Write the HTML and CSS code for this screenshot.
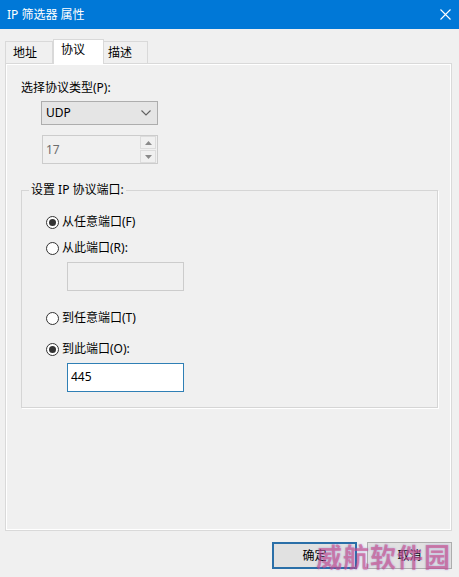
FILE: index.html
```html
<!DOCTYPE html>
<html>
<head>
<meta charset="utf-8">
<link rel="stylesheet" href="styles.css">
</head>
<body>
<div class="titlebar">
  <span class="title">IP 筛选器 属性</span>
  <svg class="close" width="11" height="11" viewBox="0 0 11 11"><path d="M0.5 0.5L10.5 10.5M10.5 0.5L0.5 10.5" stroke="#fff" stroke-width="1.1" fill="none"/></svg>
</div>

<div class="tabs">
  <div class="tab t1">地址</div>
  <div class="tab on">协议</div>
  <div class="tab t3">描述</div>
</div>

<div class="panel">
  <div class="lbl">选择协议类型(P):</div>
  <div class="select">
    <span>UDP</span>
    <svg class="chev" width="10" height="6" viewBox="0 0 10 6"><path d="M0.5 0.5L5 5L9.5 0.5" stroke="#606060" stroke-width="1.1" fill="none"/></svg>
  </div>
  <div class="spin">
    <span>17</span>
    <div class="spinbtns">
      <div class="sb"><svg width="7" height="4" viewBox="0 0 7 4"><path d="M0 4L3.5 0L7 4Z" fill="#8a8a8a"/></svg></div>
      <div class="sb"><svg width="7" height="4" viewBox="0 0 7 4"><path d="M0 0L3.5 4L7 0Z" fill="#8a8a8a"/></svg></div>
    </div>
  </div>

  <div class="group">
    <div class="legend">设置 IP 协议端口:</div>
    <div class="opt"><span class="radio on"></span>从任意端口(F)</div>
    <div class="opt r2"><span class="radio"></span>从此端口(R):</div>
    <div class="box off"></div>
    <div class="opt r3"><span class="radio"></span>到任意端口(T)</div>
    <div class="opt r4"><span class="radio on"></span>到此端口(O):</div>
    <div class="box cur">445</div>
  </div>
</div>

<div class="footer">
  <div class="btn def">确定</div>
  <div class="btn">取消</div>
  <div class="mark">威航软件园</div>
</div>
</body>
</html>
```

FILE: styles.css
```css
* {box-sizing: border-box;}
body {
  margin: 0;
  width: 459px;
  height: 577px;
  overflow: hidden;
  background: #f0f0f0;
  font-family: "Noto Sans", "Noto Sans CJK SC", sans-serif;
  font-size: 12px;
  line-height: 16px;
  color: #000;
}

.titlebar {
  height: 29px;
  background: #0078d7;
  color: #fff;
  display: flex;
  align-items: center;
  padding: 0 7px 0 7px;
}
.title {flex: 1;}
.close {margin-right: 1px;}

.tabs {
  display: flex;
  align-items: flex-end;
  padding: 10px 0 0 5px;
  height: 34px;
}
.tab {
  height: 22px;
  border: 1px solid #d9d9d9;
  border-bottom: none;
  background: #f0f0f0;
  padding: 3px 0 0 7px;
}
.t1 {width: 48px;}
.t3 {width: 44px; border-left: none; padding-left: 4px;}
.tab.on {
  width: 51px;
  height: 25px;
  margin-bottom: -1px;
  background: #fff;
  padding: 2px 0 0 7px;
  position: relative;
  z-index: 1;
}

.panel {
  margin-left: 5px;
  width: 447px;
  height: 468px;
  border: 1px solid #d9d9d9;
  box-shadow: inset 1px 1px #fff, inset -1px -1px #fff;
  padding: 16px 13px 0 15px;
}

.lbl {height: 16px;}

.select {
  margin: 5px 0 0 20px;
  width: 117px;
  height: 24px;
  background: #e5e5e5;
  border: 1px solid #adadad;
  display: flex;
  align-items: center;
  padding: 0 6px 0 4px;
  justify-content: space-between;
}

.spin {
  margin: 10px 0 0 21px;
  width: 116px;
  height: 29px;
  border: 1px solid #cccccc;
  display: flex;
  align-items: center;
  padding-left: 3px;
  color: #6d6d6d;
}
.spin span {flex: 1;}
.spinbtns {
  width: 16px;
  height: 27px;
  margin-right: 1px;
  display: flex;
  flex-direction: column;
  gap: 1px;
}
.sb {
  flex: 1;
  border: 1px solid #dcdcdc;
  display: flex;
  align-items: center;
  justify-content: center;
}

.group {
  margin-top: 26px;
  width: 417px;
  height: 218px;
  border: 1px solid #d5d5d5;
  box-shadow: 1px 1px #fff;
  padding: 0 0 0 24px;
}
.legend {
  width: fit-content;
  margin: -9px 0 16px -17px;
  padding: 0 2px;
  background: #f0f0f0;
}

.opt {
  display: flex;
  align-items: center;
  height: 16px;
}
.r2 {margin-top: 10px;}
.r3 {margin-top: 19px;}
.r4 {margin-top: 15px;}

.radio {
  width: 13px;
  height: 13px;
  border: 1px solid #333;
  border-radius: 50%;
  background: #fff;
  margin-right: 3px;
  display: flex;
  align-items: center;
  justify-content: center;
}
.radio.on::after {
  content: "";
  width: 7px;
  height: 7px;
  border-radius: 50%;
  background: #333;
}

.box {
  margin: 6px 0 0 21px;
  width: 117px;
  height: 29px;
  padding: 5px 3px;
}
.box.off {
  border: 1px solid #cccccc;
  background: #f0f0f0;
}
.box.cur {
  border: 1px solid #2f7fb5;
  background: #fff;
}

.footer {
  position: relative;
  display: flex;
  justify-content: flex-end;
  gap: 10px;
  padding: 11px 7px 0 0;
}
.btn {
  width: 85px;
  height: 27px;
  border: 1px solid #adadad;
  background: #e1e1e1;
  display: flex;
  align-items: center;
  justify-content: center;
}
.btn.def {
  border: 2px solid #2a6fa8;
}

/* watermark stamped over the buttons */
.mark {
  position: absolute;
  left: 316px;
  top: 9px;
  font-size: 26px;
  line-height: 31px;
  font-weight: bold;
  letter-spacing: 1px;
  color: rgba(220, 70, 120, 0.55);
  font-family: "Noto Sans CJK SC", sans-serif;
  white-space: nowrap;
  text-shadow: 0 0 2px rgba(90, 90, 220, 0.45);
}
```
